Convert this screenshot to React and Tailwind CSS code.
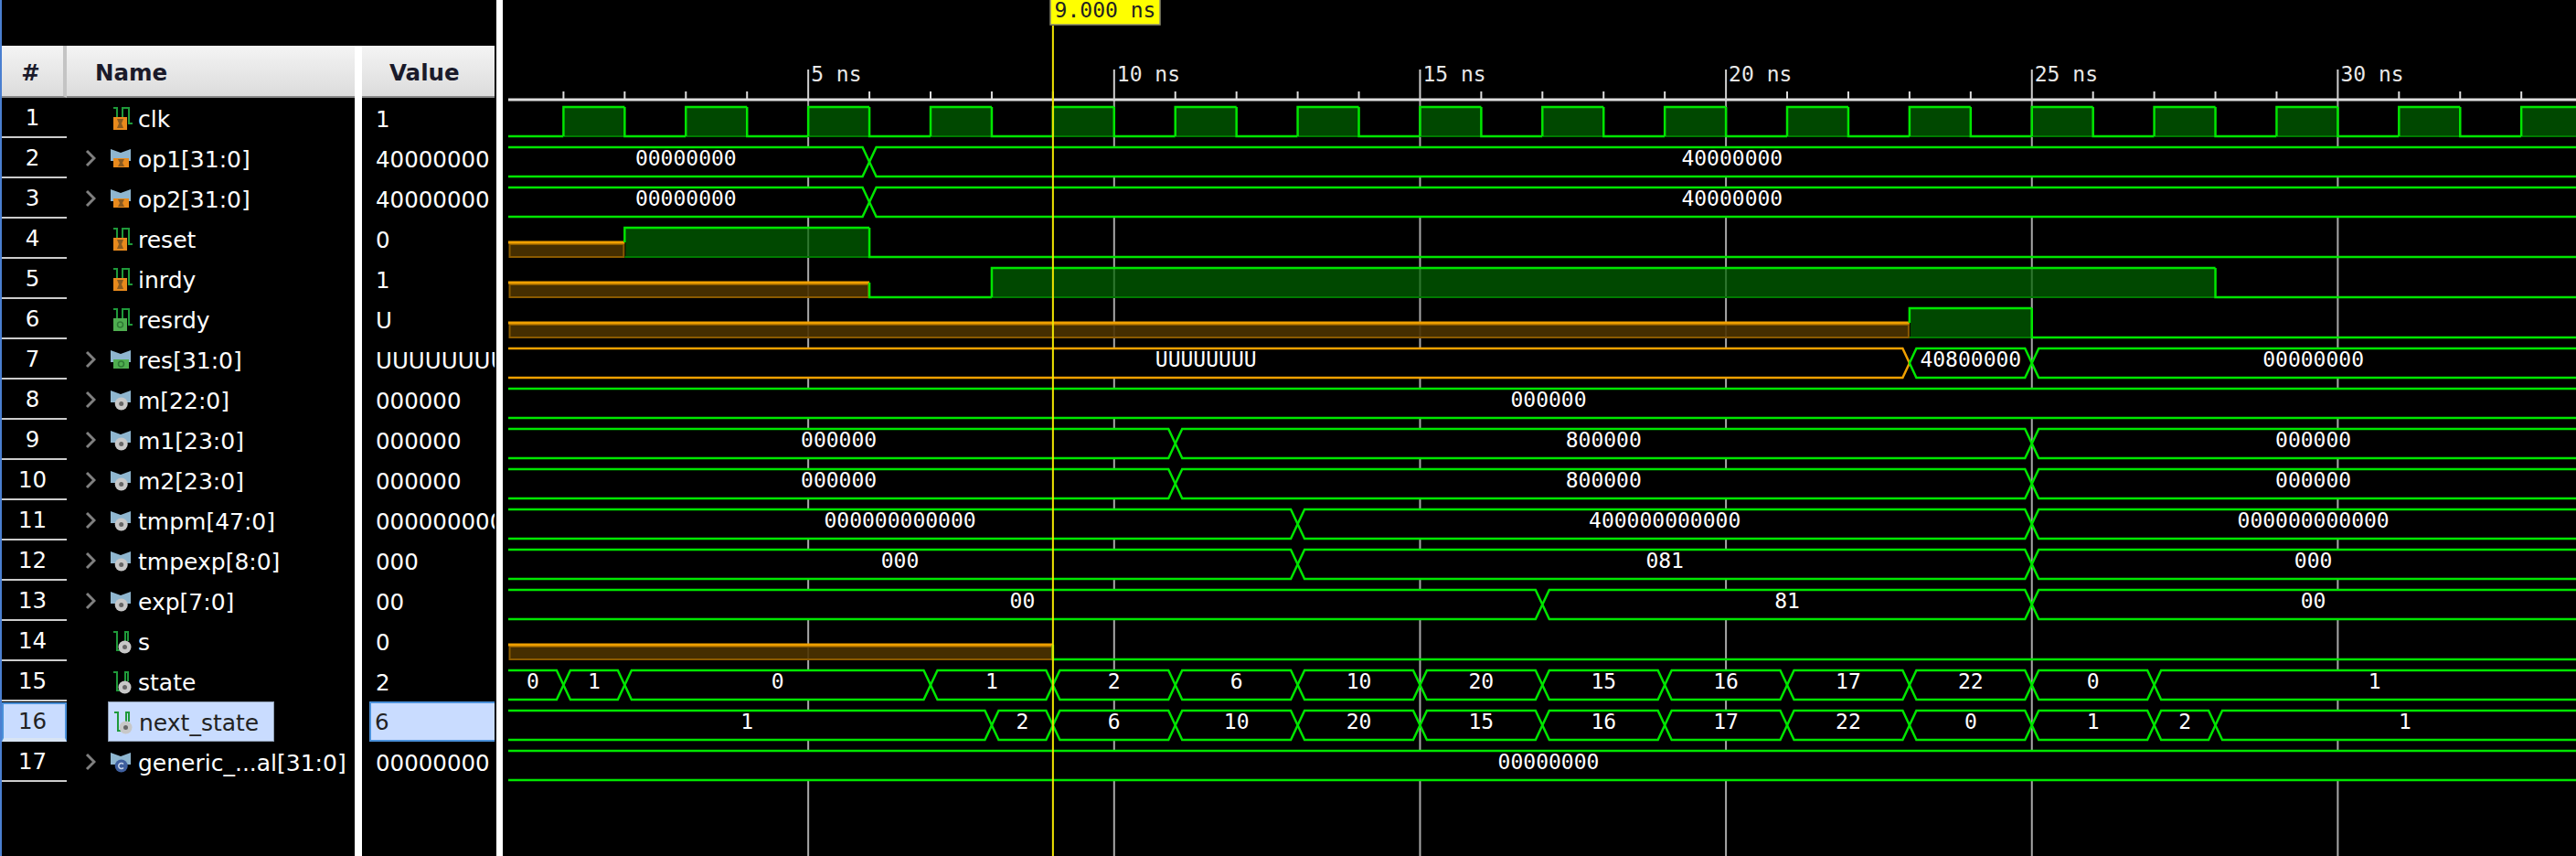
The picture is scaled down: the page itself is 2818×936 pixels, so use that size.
const X = (t) => 549.5 + 66.93 * t;
const END = 34.2;
const ROW = (n) => 117 + 44 * (n - 1);
const GREEN = "#00e600";
const ORANGE = "#f0a000";

const signals = [
  { name: "clk", value: "1", icon: "bit-in" },
  { name: "op1[31:0]", value: "40000000", icon: "bus-in", expand: true },
  { name: "op2[31:0]", value: "40000000", icon: "bus-in", expand: true },
  { name: "reset", value: "0", icon: "bit-in" },
  { name: "inrdy", value: "1", icon: "bit-in" },
  { name: "resrdy", value: "U", icon: "bit-out" },
  { name: "res[31:0]", value: "UUUUUUUU", icon: "bus-out", expand: true },
  { name: "m[22:0]", value: "000000", icon: "bus-sig", expand: true },
  { name: "m1[23:0]", value: "000000", icon: "bus-sig", expand: true },
  { name: "m2[23:0]", value: "000000", icon: "bus-sig", expand: true },
  { name: "tmpm[47:0]", value: "000000000000", icon: "bus-sig", expand: true },
  { name: "tmpexp[8:0]", value: "000", icon: "bus-sig", expand: true },
  { name: "exp[7:0]", value: "00", icon: "bus-sig", expand: true },
  { name: "s", value: "0", icon: "bit-sig" },
  { name: "state", value: "2", icon: "bit-sig" },
  { name: "next_state", value: "6", icon: "bit-sig", selected: true },
  { name: "generic_...al[31:0]", value: "00000000", icon: "bus-const", expand: true },
];

// [start time, label] pairs for the bus rows
const buses = {
  2: [[0, "00000000"], [6, "40000000"]],
  3: [[0, "00000000"], [6, "40000000"]],
  7: [[0, "UUUUUUUU", true], [23, "40800000"], [25, "00000000"]],
  8: [[0, "000000"]],
  9: [[0, "000000"], [11, "800000"], [25, "000000"]],
  10: [[0, "000000"], [11, "800000"], [25, "000000"]],
  11: [[0, "000000000000"], [13, "400000000000"], [25, "000000000000"]],
  12: [[0, "000"], [13, "081"], [25, "000"]],
  13: [[0, "00"], [17, "81"], [25, "00"]],
  15: [[0, "0"], [1, "1"], [2, "0"], [7, "1"], [9, "2"], [11, "6"], [13, "10"], [15, "20"], [17, "15"], [19, "16"], [21, "17"], [23, "22"], [25, "0"], [27, "1"]],
  16: [[0, "1"], [8, "2"], [9, "6"], [11, "10"], [13, "20"], [15, "15"], [17, "16"], [19, "17"], [21, "22"], [23, "0"], [25, "1"], [27, "2"], [28, "1"]],
  17: [[0, "00000000"]],
};

// [start time, level] where level is 0, 1 or "u"
const bits = {
  1: Array.from({ length: 35 }, (_, i) => [i, i % 2]),
  4: [[0, "u"], [2, 1], [6, 0]],
  5: [[0, "u"], [6, 0], [8, 1], [28, 0]],
  6: [[0, "u"], [23, 1], [25, 0]],
  14: [[0, "u"], [9, 0]],
};

function SignalIcon({ kind }) {
  const [shape, dir] = kind.split("-");
  const isBus = shape === "bus";
  const square = dir === "in" ? "#e98a1c" : "#4fae50";
  return (
    <svg width="26" height="28" viewBox="0 0 26 28" className="shrink-0">
      {isBus ? (
        <path d="M0 4 L11 8 L22 4 V17 H0 Z" fill="#8fb6cf" />
      ) : dir === "sig" ? (
        <path d="M3 4 H7 V24 H12 M16 14 V4 H19 V14" fill="none" stroke="#1f9a3a" strokeWidth="2" />
      ) : (
        <path d="M3 3 H7 V14 M13 14 V3 H20 V20 H24" fill="none" stroke="#1f9a3a" strokeWidth="2" />
      )}
      {(dir === "in" || dir === "out") && (
        <rect x="3" y={isBus ? 14 : 13} width={isBus ? 17 : 15} height={isBus ? 10 : 14} fill={square} />
      )}
      {dir === "in" && (
        <path d={isBus ? "M8 15 H15 L13 19 L15 23 H8 L10 19 Z" : "M7 15 H14 L12 20 L14 25 H7 L9 20 Z"} fill="#8a5a20" />
      )}
      {dir === "out" && <circle cx={isBus ? 11.5 : 10.5} cy={isBus ? 19 : 20} r="3" fill="none" stroke="#2f7a35" strokeWidth="1.5" />}
      {dir === "sig" && (
        <g>
          <circle cx={isBus ? 11.7 : 15.5} cy={isBus ? 18.5 : 20.5} r="7" fill="#c8c8c8" />
          <circle cx={isBus ? 11.7 : 15.5} cy={isBus ? 18.5 : 20.5} r="2.5" fill="#666666" />
        </g>
      )}
      {dir === "const" && (
        <g>
          <circle cx="11.7" cy="18.5" r="7" fill="#3f5f9f" />
          <path d="M14 16.5 A3 3 0 1 0 14 20.5" fill="none" stroke="#c9d6ea" strokeWidth="1.5" />
        </g>
      )}
    </svg>
  );
}

function NumberCell({ n, selected }) {
  return (
    <div className={`flex items-center justify-center text-[24.5px] pr-[4px] ${selected ? "h-[43px] mt-[1px] pt-[2px] border-2 border-b-4 bg-[#c9dcff] text-[#222222] border-[#4a90d9] border-b-[#d8e4f4]" : "h-[44px] pt-[3px] border-b-2 text-white border-[#cccccc]"}`}>
      {n}
    </div>
  );
}

function NameCell({ s }) {
  return (
    <div className="h-[44px] flex items-center pl-[20px]">
      <span className={`w-[25px] shrink-0 ${s.expand ? "" : "invisible"}`}>
        <svg width="12" height="20" viewBox="0 0 12 20" className="block">
          <path d="M2 2 L10 10 L2 18" fill="none" stroke="#808080" strokeWidth="3" />
        </svg>
      </span>
      <div className={`flex items-center gap-[4px] h-[44px] pl-[3px] pr-[16px] ${s.selected ? "bg-[#c9dcff] border border-[#8c9bb0] text-[#222222]" : "text-white"}`}>
        <SignalIcon kind={s.icon} />
        <span className="text-[25px] pt-[4px] whitespace-nowrap">{s.name}</span>
      </div>
    </div>
  );
}

function ValueCell({ s }) {
  return (
    <div className={`h-[44px] flex items-center text-[24.5px] whitespace-nowrap overflow-hidden ${s.selected ? "ml-[8px] pl-[4px] pt-[3px] bg-[#c9dcff] text-[#222222] border-2 border-r-0 border-[#4a90d9]" : "pl-[15px] pt-[5px] text-white"}`}>
      {s.value}
    </div>
  );
}

function Header({ children, className }) {
  return (
    <div className={`h-[57px] pt-[5px] flex items-center font-bold text-[24.5px] text-[#1a1a2a] border-b-2 border-[#888888] bg-gradient-to-b from-[#f4f4f4] to-[#dcdcdc] ${className}`}>
      {children}
    </div>
  );
}

function BitRow({ n }) {
  const top = ROW(n);
  const bottom = top + 32;
  const mid = top + 16;
  const seg = bits[n];
  return (
    <g>
      {seg.map(([t, level], i) => {
        const x1 = X(t);
        const x2 = X(i + 1 < seg.length ? seg[i + 1][0] : END);
        const prev = i > 0 ? seg[i - 1][1] : null;
        if (level === "u") {
          return (
            <g key={i}>
              <rect x={x1 + 8} y={mid + 2} width={x2 - x1 - 9} height={14} fill="#4d3300" stroke="#8a5a00" strokeWidth="2" fillOpacity="0.9" />
              <line x1={x1} x2={x2} y1={mid} y2={mid} stroke={ORANGE} strokeWidth="3" />
            </g>
          );
        }
        const fromY = prev === "u" ? mid : prev === 1 ? top : prev === 0 ? bottom : null;
        const y = level === 1 ? top : bottom;
        return (
          <g key={i}>
            {level === 1 && <rect x={x1 + 1} y={top} width={x2 - x1 - 1} height={32} fill="#006400" fillOpacity="0.72" />}
            {level === 1 && <line x1={x1} x2={x2} y1={bottom} y2={bottom} stroke="#007a00" strokeWidth="2" />}
            <path d={`M${x1} ${fromY === null ? y : fromY} V${y} H${x2}`} fill="none" stroke={GREEN} strokeWidth="2.5" />
          </g>
        );
      })}
    </g>
  );
}

function BusRow({ n }) {
  const top = ROW(n);
  const bottom = top + 32;
  const seg = buses[n];
  const hw = 7.5;
  return (
    <g>
      {seg.map(([t, label, unknown], i) => {
        const x1 = X(t);
        const x2 = X(i + 1 < seg.length ? seg[i + 1][0] : END);
        const a = i === 0 ? x1 : x1 + hw;
        const b = i + 1 === seg.length ? x2 : x2 - hw;
        const color = unknown ? ORANGE : GREEN;
        const open = i === 0 ? `M${a} ${top}` : `M${x1} ${top + 16} L${a} ${top}`;
        const close = i + 1 === seg.length ? `H${b}` : `H${b} L${x2} ${top + 16}`;
        const open2 = i === 0 ? `M${a} ${bottom}` : `M${x1} ${top + 16} L${a} ${bottom}`;
        return (
          <g key={i}>
            <path d={`M${a} ${top} H${b} L${x2} ${top + 16} L${b} ${bottom} H${a} L${x1} ${top + 16} Z`} fill="#000000" />
            <path d={`${open} ${close}`} fill="none" stroke={color} strokeWidth="2.5" />
            <path d={`${open2} ${close}`} fill="none" stroke={color} strokeWidth="2.5" />
            <text x={(x1 + x2) / 2} y={top + 12} dy="0.36em" textAnchor="middle" className="fill-white text-[23px] font-['DejaVu_Sans_Mono',monospace]">
              {label}
            </text>
          </g>
        );
      })}
    </g>
  );
}

function Waves() {
  const ticks = Array.from({ length: 34 }, (_, i) => i + 1);
  const majors = ticks.filter((t) => t % 5 === 0);
  return (
    <svg width="2268" height="936" viewBox="550 0 2268 936" className="block">
      {majors.map((t) => (
        <line key={t} x1={X(t)} x2={X(t)} y1="109" y2="936" stroke="#a8a8a8" strokeWidth="2" />
      ))}
      <svg x="556" y="0" width="2262" height="936" viewBox="556 0 2262 936">
        {Object.keys(bits).map((n) => (
          <BitRow key={n} n={Number(n)} />
        ))}
        {Object.keys(buses).map((n) => (
          <BusRow key={n} n={Number(n)} />
        ))}
      </svg>
      <line x1="556" x2="2818" y1="109" y2="109" stroke="#dddddd" strokeWidth="3" />
      {ticks.map((t) => (
        <line key={t} x1={X(t)} x2={X(t)} y1={t % 5 === 0 ? 76 : 100} y2="109" stroke={t % 5 === 0 ? "#d0d0d0" : "#dddddd"} strokeWidth="2" />
      ))}
      {majors.map((t) => (
        <text key={t} x={X(t) + 3} y="89" className="fill-[#e8e8e8] text-[23px] font-['DejaVu_Sans_Mono',monospace]">
          {t} ns
        </text>
      ))}
      <line x1={X(9)} x2={X(9)} y1="28" y2="936" stroke="#f2e600" strokeWidth="2" />
      <rect x="1149" y="-2" width="120" height="29" fill="#ffff00" stroke="#8a8a70" strokeWidth="1.5" />
      <text x="1209" y="11" dy="0.36em" textAnchor="middle" className="fill-[#222222] text-[23px] font-['DejaVu_Sans_Mono',monospace]">
        9.000 ns
      </text>
    </svg>
  );
}

export default function App() {
  return (
    <div className="w-[2818px] h-[936px] overflow-hidden bg-black flex font-['DejaVu_Sans',sans-serif]">
      <div className="w-[2px] bg-[#4a7fd0]" />
      <div className="w-[541px] flex flex-col">
        <div className="h-[50px] shrink-0" />
        <div className="flex flex-1">
          <div className="w-[71px] shrink-0">
            <Header className="justify-center pr-[4px] border-r-4 border-r-[#c4c4c4]">#</Header>
            {signals.map((s, i) => (
              <NumberCell key={s.name} n={i + 1} selected={s.selected} />
            ))}
          </div>
          <div className="w-[315px] shrink-0">
            <Header className="pl-[31px]">Name</Header>
            {signals.map((s) => (
              <NameCell key={s.name} s={s} />
            ))}
          </div>
          <div className="w-[8px] shrink-0 bg-white" />
          <div className="w-[145px] shrink-0">
            <Header className="pl-[30px]">Value</Header>
            {signals.map((s) => (
              <ValueCell key={s.name} s={s} />
            ))}
          </div>
        </div>
      </div>
      <div className="w-[7px] bg-white" />
      <Waves />
    </div>
  );
}
